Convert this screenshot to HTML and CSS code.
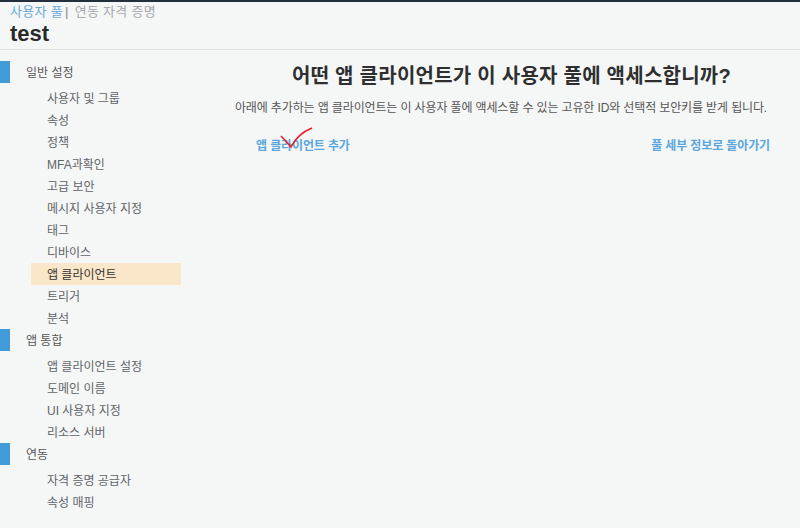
FILE: index.html
```html
<!DOCTYPE html>
<html lang="ko">
<head>
    <meta charset="UTF-8">
    <title>test</title>
    <link rel="stylesheet" href="styles.css">
</head>
<body>
    <header class="page-header">
        <div class="crumbs"><a class="crumb-link">사용자 풀</a><span class="crumb-sep">|</span><span class="crumb-text">연동 자격 증명</span></div>
        <h1>test</h1>
    </header>
    <div class="layout">
        <nav class="sidebar">
            <div class="nav-group">일반 설정</div>
            <ul class="nav-list">
                <li>사용자 및 그룹</li>
                <li>속성</li>
                <li>정책</li>
                <li>MFA과확인</li>
                <li>고급 보안</li>
                <li>메시지 사용자 지정</li>
                <li>태그</li>
                <li>디바이스</li>
                <li class="active">앱 클라이언트</li>
                <li>트리거</li>
                <li>분석</li>
            </ul>
            <div class="nav-group">앱 통합</div>
            <ul class="nav-list">
                <li>앱 클라이언트 설정</li>
                <li>도메인 이름</li>
                <li>UI 사용자 지정</li>
                <li>리소스 서버</li>
            </ul>
            <div class="nav-group">연동</div>
            <ul class="nav-list">
                <li>자격 증명 공급자</li>
                <li>속성 매핑</li>
            </ul>
        </nav>
        <main class="content">
            <h2>어떤 앱 클라이언트가 이 사용자 풀에 액세스합니까?</h2>
            <p>아래에 추가하는 앱 클라이언트는 이 사용자 풀에 액세스할 수 있는 고유한 ID와 선택적 보안키를 받게 됩니다.</p>
            <div class="actions">
                <a class="add-link">앱 클라이언트 추가
                    <svg class="check" width="34" height="22" viewBox="0 0 34 22"><path d="M1 9 C4 12 7 15 11 20 C15 12 22 5 32 1" fill="none" stroke="#ec1c24" stroke-width="1.6"/></svg>
                </a>
                <a>풀 세부 정보로 돌아가기</a>
            </div>
        </main>
    </div>
</body>
</html>
```

FILE: styles.css
```css
* {
    box-sizing: border-box;
}
html, body {
    margin: 0;
    height: 100%;
}
body {
    background-color: #f5f7f7;
    border-top: 2px solid #232f3e;
    color: #444;
    font-family: "Liberation Sans", "Noto Sans CJK KR", sans-serif;
    font-size: 12px;
    overflow: hidden;
}
.page-header {
    height: 48px;
    padding: 1px 10px 0;
    border-bottom: 1px solid #dfe2e2;
}
.crumbs {
    font-size: 13px;
    line-height: 18px;
    letter-spacing: 0.3px;
}
.crumb-link {
    color: #6aa9d8;
}
.crumb-sep {
    color: #888;
    margin: 0 6px 0 2px;
}
.crumb-text {
    color: #a3a9ac;
}
h1 {
    margin: 0;
    color: #2a2a2a;
    font-size: 22px;
    line-height: 25px;
}
.layout {
    display: flex;
}
.sidebar {
    width: 181px;
    padding-top: 11px;
    flex-shrink: 0;
}
.nav-group {
    height: 22px;
    line-height: 24px;
    padding-left: 26px;
    background: linear-gradient(#3f9bd9, #3f9bd9) left top / 10px 100% no-repeat;
    color: #555;
}
.nav-list {
    list-style: none;
    margin: 4px 0 0;
    padding: 0 0 0 31px;
}
.nav-list li {
    height: 22px;
    line-height: 24px;
    padding-left: 16px;
    color: #5f6468;
}
.nav-list li.active {
    background-color: #fae6c8;
    color: #333;
}
.content {
    flex: 1;
    padding: 0 30px 0 75px;
}
h2 {
    margin: 13px 0 0 -3px;
    color: #2f2f2f;
    font-size: 20px;
    line-height: 26px;
    letter-spacing: 0.25px;
    text-align: center;
}
p {
    margin: 9px 0 0 -24px;
    color: #555;
    line-height: 20px;
    letter-spacing: -0.13px;
    text-align: center;
    white-space: nowrap;
}
.actions {
    display: flex;
    justify-content: space-between;
    margin-top: 19px;
    font-weight: bold;
    line-height: 18px;
    letter-spacing: -0.12px;
    color: #5ba6de;
}
.add-link {
    position: relative;
}
.check {
    position: absolute;
    left: 24px;
    top: -10px;
}
```
